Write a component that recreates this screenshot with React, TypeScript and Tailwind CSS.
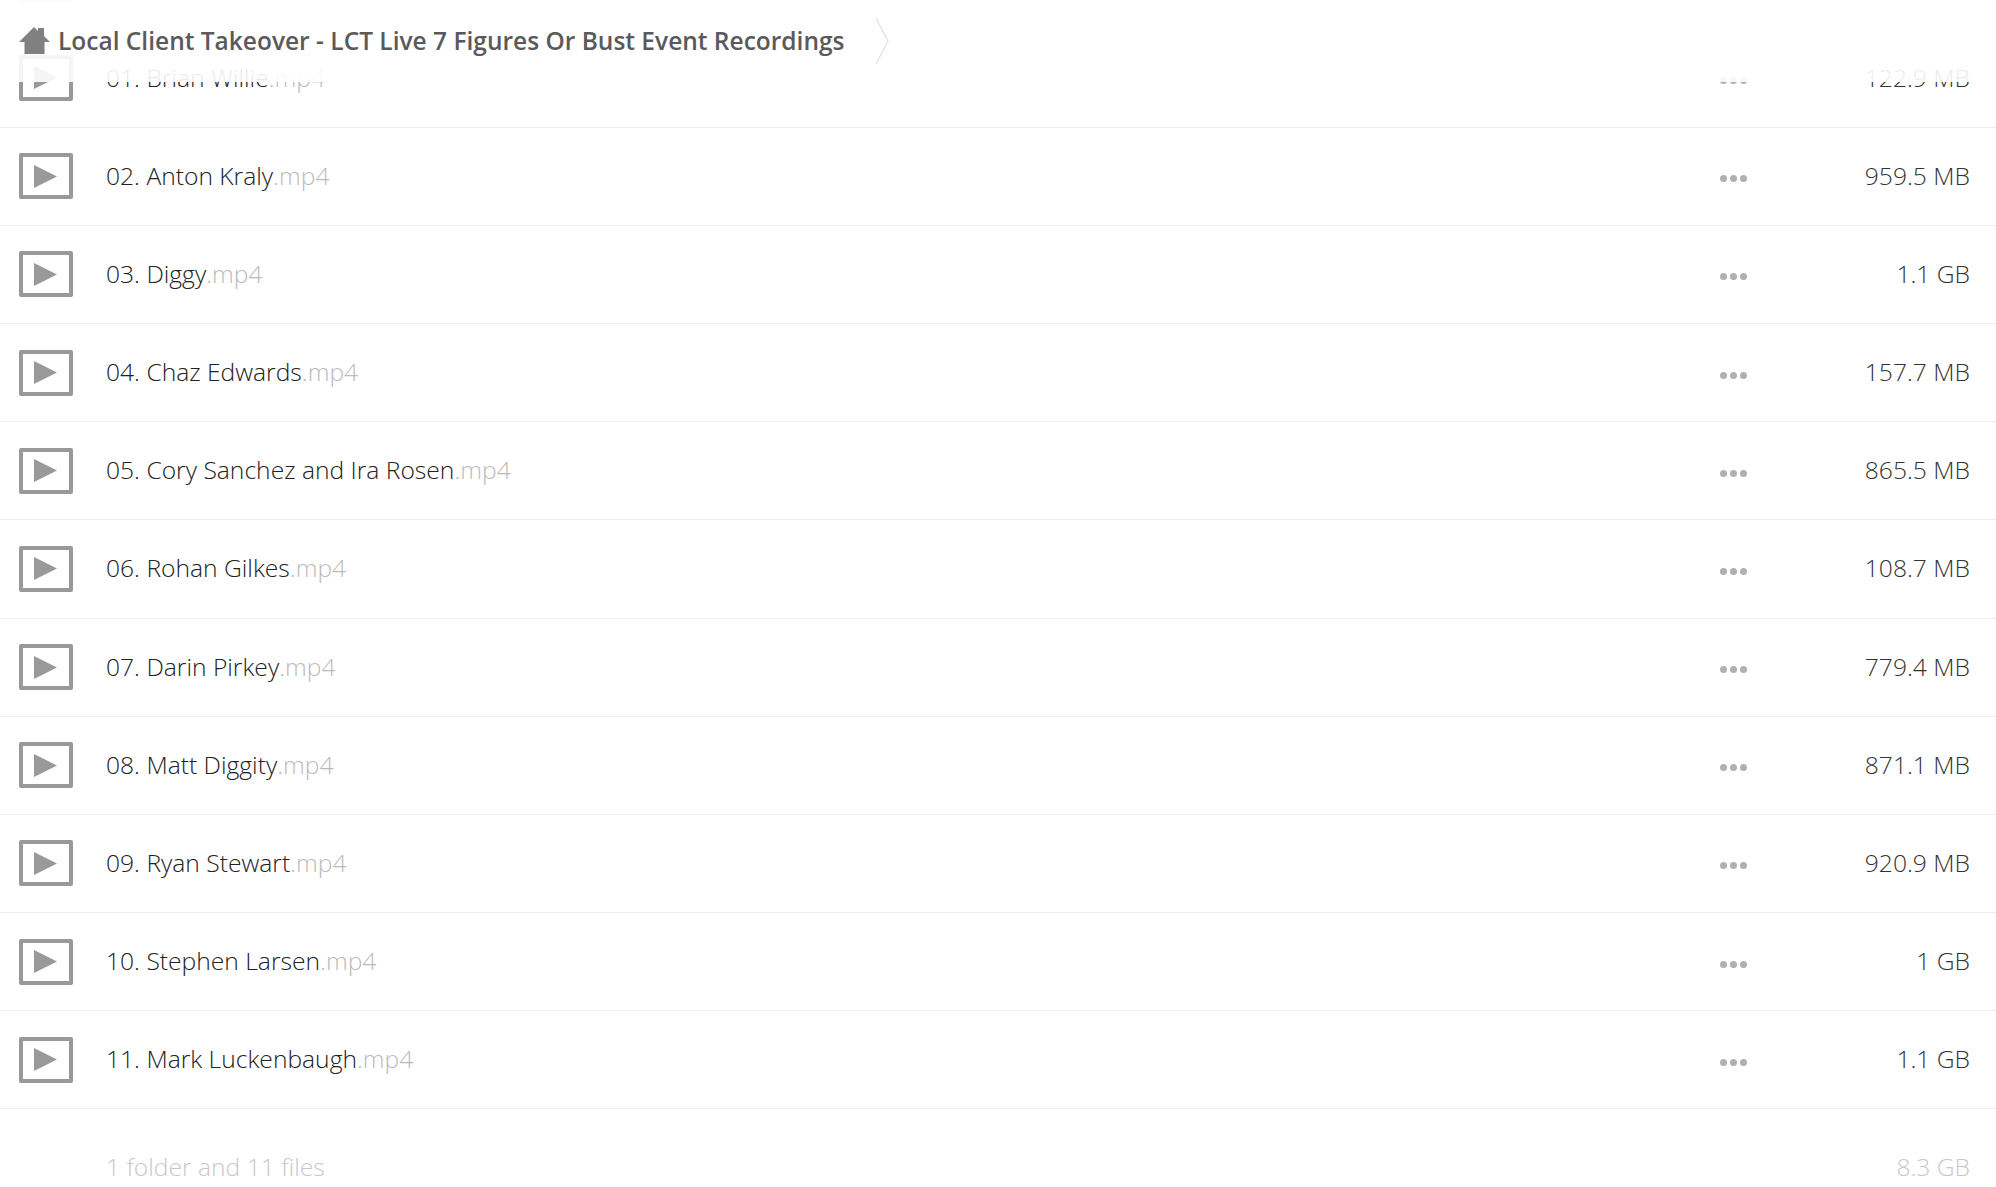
const files = [
  { name: "01. Brian Willie", size: "122.9 MB" },
  { name: "02. Anton Kraly", size: "959.5 MB" },
  { name: "03. Diggy", size: "1.1 GB" },
  { name: "04. Chaz Edwards", size: "157.7 MB" },
  { name: "05. Cory Sanchez and Ira Rosen", size: "865.5 MB" },
  { name: "06. Rohan Gilkes", size: "108.7 MB" },
  { name: "07. Darin Pirkey", size: "779.4 MB" },
  { name: "08. Matt Diggity", size: "871.1 MB" },
  { name: "09. Ryan Stewart", size: "920.9 MB" },
  { name: "10. Stephen Larsen", size: "1 GB" },
  { name: "11. Mark Luckenbaugh", size: "1.1 GB" },
];

function VideoIcon() {
  return (
    <div className="flex h-[46px] w-[54px] shrink-0 items-center justify-center rounded-[2px] border-4 border-[#999999] bg-white pr-px">
      <svg width="23" height="23" viewBox="0 0 23 23">
        <path d="M0 0 L23 11.5 L0 23 Z" fill="#999999" />
      </svg>
    </div>
  );
}

function Dots() {
  return (
    <div className="flex w-[27px] gap-[3px] pt-[5px]">
      <span className="size-[7px] rounded-full bg-[#b0b0b0]" />
      <span className="size-[7px] rounded-full bg-[#b0b0b0]" />
      <span className="size-[7px] rounded-full bg-[#b0b0b0]" />
    </div>
  );
}

function FileRow({ name, size }: { name: string; size: string }) {
  return (
    <div className="flex h-[98.2px] items-center border-b border-[#ededed] pl-[19px] pr-[26px]">
      <VideoIcon />
      <div className="ml-[33px] flex-1 text-[#222222]">
        {name}
        <span className="text-[#bbbbbb]">.mp4</span>
      </div>
      <Dots />
      <div className="w-[223px] text-right text-[#333333]">{size}</div>
    </div>
  );
}

export default function App() {
  return (
    <div className="relative h-[1187px] overflow-hidden bg-white font-['Open_Sans',sans-serif] text-[24.64px] font-light">
      <div className="-mt-[68.8px]">
        <div className="flex h-[98.2px] items-center border-b border-[#ededed] pl-[19px]">
          <div className="h-[46px] w-[54px] rounded-[2px] bg-[#d8dde6]" />
        </div>
        {files.map((f) => (
          <FileRow key={f.name} name={f.name} size={f.size} />
        ))}
        <div className="flex h-[98px] items-center pl-[106px] pr-[26px] pt-[18px] text-[#c8c8c8]">
          <div className="flex-1">1 folder and 11 files</div>
          <div>8.3 GB</div>
        </div>
      </div>

      <div className="absolute inset-x-0 top-0 flex h-[82px] items-center bg-white/90 pl-[19px]">
        <svg width="31" height="28" viewBox="0 0 31 28" className="shrink-0">
          <path d="M15 0 L19 4 L19 1 L25 1 L25 9 L31 15 L25.5 15 L25.5 27 L5.5 27 L5.5 15 L0 15 Z" fill="#808080" />
        </svg>
        <div className="ml-[8px] text-[24.5px] font-semibold text-[#5a5a5a]">
          Local Client Takeover - LCT Live 7 Figures Or Bust Event Recordings
        </div>
        <svg width="14" height="46" viewBox="0 0 14 46" className="ml-[31px] shrink-0">
          <path d="M1 0 L13 23 L1 46" fill="none" stroke="#d8d8d8" />
        </svg>
      </div>
    </div>
  );
}
